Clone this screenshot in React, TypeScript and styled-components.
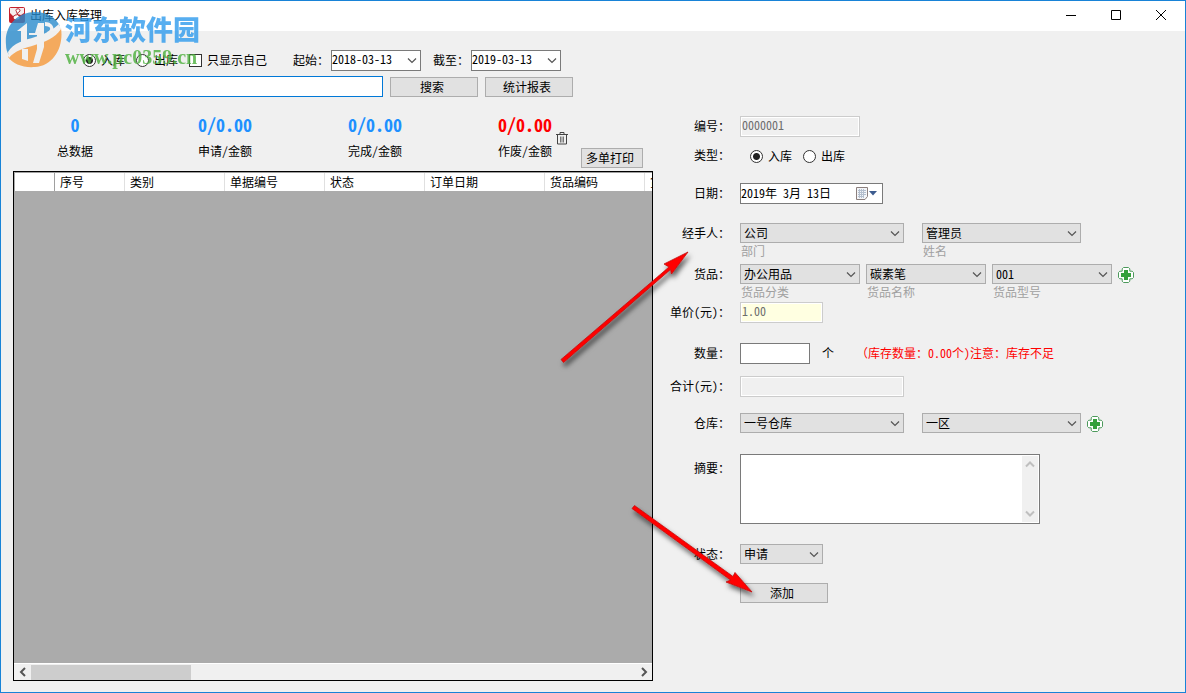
import React from 'react';
import styled, { createGlobalStyle } from 'styled-components';

const GlobalStyle = createGlobalStyle`
  *, *::before, *::after { box-sizing: border-box; }
  body {
    margin: 0;
    background: #f0f0f0;
  }
  body, button, input, select, textarea {
    font-family: "Noto Sans Mono CJK SC", "Noto Sans CJK SC", sans-serif;
    font-size: 12px;
    line-height: 16px;
    color: #000;
  }
`;

const Frame = styled.div`
  position: relative;
  display: flex;
  flex-direction: column;
  min-height: 100vh;
  border: 1px solid #1883d7;
  background: #f0f0f0;
`;

const TitleBar = styled.header`
  display: flex;
  align-items: center;
  height: 30px;
  padding: 0 2px 2px 8px;
  background: #fff;
`;

const Title = styled.h1`
  margin: 0 auto 0 5px;
  font-size: 12px;
  font-weight: 400;
  line-height: 16px;
`;

const CaptionButton = styled.button`
  display: grid;
  place-items: center;
  width: 45px;
  height: 28px;
  padding: 0;
  border: 0;
  background: transparent;
`;

const Body = styled.main`
  flex: 1;
  display: flex;
  padding: 0 12px 11px;
`;

const ListPane = styled.section`
  flex: 0 1 640px;
  min-width: 0;
  display: flex;
  flex-direction: column;
  padding-top: 19px;
`;

const FilterRow = styled.div`
  display: flex;
  align-items: center;
  gap: 12px;
  height: 20px;
  padding-left: 70px;
  white-space: nowrap;
`;

const SearchRow = styled.div`
  display: flex;
  align-items: flex-end;
  gap: 7px;
  margin-top: 6px;
  padding-left: 70px;
`;

const Choices = styled.div`
  display: flex;
  align-items: center;
  gap: 11px;
  margin-right: 14px;
`;

const Choice = styled.label`
  display: flex;
  align-items: center;
  gap: 5px;
`;

const Radio = styled.input.attrs({ type: 'radio' })`
  appearance: none;
  width: 13px;
  height: 13px;
  margin: 0;
  border: 1px solid #333;
  border-radius: 50%;
  background: #fff;
  &:checked {
    background: radial-gradient(circle, #222 0 3px, #fff 4px);
  }
`;

const Checkbox = styled.input.attrs({ type: 'checkbox' })`
  appearance: none;
  width: 13px;
  height: 13px;
  margin: 0;
  border: 1px solid #333;
  background: #fff;
`;

const DateLabel = styled.label`
  display: flex;
  align-items: center;
  gap: 2px;
`;

const Button = styled.button<{ $width: number }>`
  flex: none;
  width: ${(p) => p.$width}px;
  height: 20px;
  padding: 0 4px 0 0;
  border: 1px solid #adadad;
  background: #e1e1e1;
  line-height: 18px;
`;

const TextBox = styled.input<{ $width: number; $tone?: 'focus' | 'disabled' | 'price' }>`
  width: ${(p) => p.$width}px;
  height: 21px;
  padding: 0 1px 4px;
  border: 1px solid
    ${(p) => (p.$tone === 'focus' ? '#0078d7' : p.$tone ? '#cccccc' : '#7a7a7a')};
  background: ${(p) => (p.$tone === 'price' ? '#ffffe1' : p.$tone === 'disabled' ? '#f0f0f0' : '#fff')};
  box-shadow: ${(p) => (p.$tone === 'disabled' || p.$tone === 'price' ? 'inset 0 0 0 1px #fff' : 'none')};
  color: ${(p) => (p.$tone === 'focus' ? '#000' : '#6d6d6d')};
  outline: 0;
`;

const ComboBox = styled.div<{ $width: number; $light?: boolean }>`
  position: relative;
  width: ${(p) => p.$width}px;
  height: ${(p) => (p.$light ? 21 : 20)}px;
  select {
    appearance: none;
    width: 100%;
    height: 100%;
    padding: ${(p) => (p.$light ? '0 18px 3px 0' : '0 18px 1px 3px')};
    border: 1px solid ${(p) => (p.$light ? '#7a7a7a' : '#adadad')};
    border-radius: 0;
    background: ${(p) => (p.$light ? '#fff' : '#e1e1e1')};
    outline: 0;
  }
  svg {
    position: absolute;
    top: 7px;
    right: 4px;
    pointer-events: none;
  }
`;

const StatsRow = styled.div`
  display: flex;
  align-items: flex-start;
  height: 52px;
  margin-top: 19px;
  padding-left: 35px;
`;

const Stats = styled.div`
  display: flex;
  gap: 96px;
`;

const Stat = styled.div<{ $color: string }>`
  width: 54px;
  text-align: center;
  white-space: nowrap;
  strong {
    display: block;
    margin-bottom: 11px;
    font-size: 18px;
    line-height: 16px;
    color: ${(p) => p.$color};
  }
`;

const IconButton = styled.button<{ $height: number }>`
  display: grid;
  place-items: center;
  height: ${(p) => p.$height}px;
  padding: 0;
  border: 0;
  background: transparent;
`;

const StatActions = styled.div`
  display: flex;
  gap: 13px;
  height: 100%;
  padding-left: 4px;
  > :last-child { align-self: flex-end; }
`;

const GridBox = styled.div`
  flex: 1;
  display: flex;
  flex-direction: column;
  min-height: 300px;
  margin-top: 3px;
  border: 1px solid #000;
  background: #ababab;
`;

const GridView = styled.div`
  flex: 1;
  overflow: hidden;
  padding: 0 1px;
`;

const Table = styled.table`
  width: 731px;
  table-layout: fixed;
  border-collapse: separate;
  border-spacing: 0;
  border-top: 1px solid #a0a0a0;
  th {
    height: 18px;
    padding: 0 5px;
    border-right: 1px solid #e0e0e0;
    background: #fff;
    font-weight: 400;
    line-height: 16px;
    text-align: left;
    white-space: nowrap;
  }
  th:first-child { border-right-color: #a0a0a0; }
`;

const ScrollTrack = styled.div`
  display: flex;
  align-items: center;
  height: 17px;
  border-top: 1px solid #fff;
  background: #f0f0f0;
`;

const ScrollArrow = styled.button`
  display: grid;
  place-items: center;
  width: 17px;
  height: 16px;
  padding: 0;
  border: 0;
  background: transparent;
`;

const ScrollThumb = styled.div`
  width: 25%;
  height: 15px;
  margin-right: auto;
  background: #cdcdcd;
`;

const FormPane = styled.form`
  flex: 1;
  min-width: 0;
  padding-top: 85px;
`;

const Row = styled.div<{ $gap?: number }>`
  display: grid;
  grid-template-columns: 77px 1fr;
  column-gap: 10px;
  margin-top: ${(p) => p.$gap ?? 0}px;
`;

const RowLabel = styled.label<{ $tall?: boolean }>`
  line-height: ${(p) => (p.$tall ? 28 : 20)}px;
  text-align: right;
  white-space: nowrap;
`;

const Fields = styled.div<{ $gap?: number }>`
  display: flex;
  align-items: flex-start;
  gap: ${(p) => p.$gap ?? 6}px;
  white-space: nowrap;
`;

const TypeChoices = styled.div`
  display: flex;
  align-items: center;
  gap: 11px;
  height: 22px;
  padding-left: 10px;
`;

const Hint = styled.div`
  height: 16px;
  padding-left: 1px;
  line-height: 16px;
  color: #a0a0a0;
`;

const DateBox = styled.div`
  display: flex;
  align-items: center;
  width: 143px;
  height: 21px;
  padding-right: 5px;
  border: 1px solid #7a7a7a;
  background: #fff;
  input {
    flex: 1;
    min-width: 0;
    height: 19px;
    padding: 0 0 2px;
    border: 0;
    background: transparent;
    outline: 0;
  }
`;

const Unit = styled.span`
  padding-left: 6px;
  line-height: 20px;
`;

const Warning = styled.span`
  padding-left: 16px;
  line-height: 20px;
  color: #f00;
`;

const MemoBox = styled.div`
  display: flex;
  width: 300px;
  height: 70px;
  padding: 1px;
  border: 1px solid #7a7a7a;
  background: #fff;
  textarea {
    flex: 1;
    min-width: 0;
    padding: 2px;
    border: 0;
    outline: 0;
    resize: none;
    overflow: hidden;
  }
`;

const MemoScroll = styled.div`
  display: flex;
  flex-direction: column;
  justify-content: space-between;
  align-items: center;
  width: 16px;
  padding: 5px 0;
  background: #f0f0f0;
`;

const Overlay = styled.svg`
  position: absolute;
  top: -1px;
  left: -1px;
  width: 780px;
  height: 620px;
  pointer-events: none;
`;

const Watermark = styled.div`
  position: absolute;
  top: 10px;
  left: 4px;
  display: flex;
  gap: 3px;
  opacity: 0.8;
  pointer-events: none;
`;

const WatermarkName = styled.div`
  font-family: "Noto Sans CJK SC", sans-serif;
  font-size: 27px;
  font-weight: 900;
  line-height: 36px;
  white-space: nowrap;
  color: #2e9bed;
`;

const WatermarkSite = styled.div`
  font-family: "Liberation Serif", serif;
  font-size: 20px;
  font-weight: 700;
  line-height: 20px;
  white-space: nowrap;
  color: #4cb03c;
`;

type Direction = 'down' | 'up' | 'left' | 'right';

const chevrons: Record<Direction, string> = {
  down: 'M1 1.5l4 4 4-4',
  up: 'M1 5.5l4-4 4 4',
  left: 'M6 1L2 5l4 4',
  right: 'M2 1l4 4-4 4',
};

function Chevron({ dir = 'down', color = '#555', weight = 1.2 }: { dir?: Direction; color?: string; weight?: number }) {
  const vertical = dir === 'down' || dir === 'up';
  return (
    <svg width={vertical ? 10 : 8} height={vertical ? 7 : 10} fill="none" aria-hidden="true">
      <path d={chevrons[dir]} stroke={color} strokeWidth={weight} />
    </svg>
  );
}

function Combo({ id, label, value, width, light }: { id?: string; label?: string; value: string; width: number; light?: boolean }) {
  return (
    <ComboBox $width={width} $light={light}>
      <select id={id} aria-label={label} defaultValue={value}>
        <option>{value}</option>
      </select>
      <Chevron />
    </ComboBox>
  );
}

function HintedCombo({ hint, ...rest }: { hint: string; id?: string; value: string; width: number }) {
  return (
    <div>
      <Combo label={hint} {...rest} />
      <Hint>{hint}</Hint>
    </div>
  );
}

function AddButton({ label }: { label: string }) {
  return (
    <IconButton $height={22} type="button" aria-label={label}>
      <svg width="16" height="16" aria-hidden="true">
        <path
          d="M5.500 .5h5l1.300 1.300V4.200h2.400l1.300 1.300v5l-1.300 1.300h-2.400v2.400l-1.300 1.300h-5l-1.300-1.300v-2.400H1.800L.5 10.500v-5l1.300-1.300h2.400V1.800z"
          fill="#fff"
          stroke="#4d9a5c"
        />
        <path d="M6 3h4v3h3v4h-3v3H6v-3H3V6h3z" fill="#35a03c" />
      </svg>
    </IconButton>
  );
}

function AppIcon() {
  return (
    <svg width="16" height="16" aria-hidden="true">
      <rect width="16" height="16" rx="2" fill="#c4202c" />
      <path d="M1 1h14v5l-3 2-4-1-4 2-3-3z" fill="#f5eeee" />
      <path d="M8 2c3-1 4 2 2 3-2 1-2 3 0 4s1 4-2 4-5-2-3-4 4 0 3-3-2-3 0-4z" fill="#fff" stroke="#b3202b" />
    </svg>
  );
}

function WatermarkLogo() {
  return (
    <svg width="57" height="58" aria-hidden="true">
      <path d="M1 34C-1 14 13 1 30 1c12 0 20 5 25 14-3 4-9 8-16 11C29 31 10 33 4 44 2 41 1 38 1 34z" fill="#2a8ccd" />
      <path d="M3 46c9-9 22-11 32-15 10-4 17-9 21-14 3 20-8 38-26 39C18 57 8 53 3 46z" fill="#f5993a" />
      <path d="M3 41c5-9 17-12 27-15 10-3 19-8 24-13l2 5c-6 9-16 13-26 16C20 37 9 40 4 47z" fill="#f0f0f0" />
      <path d="M12 20l10-8v19h-6V20zM24 22h6l3-10h6v24l-5 16h-6l4-14V24h-8zM17 38h6v12l-6-2zM40 11c10 0 12 12 2 14v-4c5-2 4-6-2-6z" fill="#f0f0f0" />
    </svg>
  );
}

const stats = [
  { value: '0', label: '总数据', color: '#1e90ff' },
  { value: '0/0.00', label: '申请/金额', color: '#1e90ff' },
  { value: '0/0.00', label: '完成/金额', color: '#1e90ff' },
  { value: '0/0.00', label: '作废/金额', color: '#ff0000' },
];

const columns = [
  { title: '', width: 40 },
  { title: '序号', width: 70 },
  { title: '类别', width: 100 },
  { title: '单据编号', width: 100 },
  { title: '状态', width: 100 },
  { title: '订单日期', width: 120 },
  { title: '货品编码', width: 100 },
  { title: '货品名称', width: 101 },
];

export default function App() {
  return (
    <>
      <GlobalStyle />
      <Frame>
        <TitleBar>
          <AppIcon />
          <Title>出库入库管理</Title>
          <CaptionButton aria-label="最小化">
            <svg width="10" height="10"><path d="M0 5.500h10" stroke="#000" /></svg>
          </CaptionButton>
          <CaptionButton aria-label="最大化">
            <svg width="10" height="10"><path d="M.5.5h9v9h-9z" fill="none" stroke="#000" /></svg>
          </CaptionButton>
          <CaptionButton aria-label="关闭">
            <svg width="10" height="10"><path d="M0 0l10 10M10 0L0 10" stroke="#000" /></svg>
          </CaptionButton>
        </TitleBar>

        <Body>
          <ListPane>
            <FilterRow>
              <Choices>
                <Choice><Radio name="filter" defaultChecked />入库</Choice>
                <Choice><Radio name="filter" />出库</Choice>
                <Choice><Checkbox />只显示自己</Choice>
              </Choices>
              <DateLabel>起始：<Combo value="2018-03-13" width={90} light /></DateLabel>
              <DateLabel>截至：<Combo value="2019-03-13" width={90} light /></DateLabel>
            </FilterRow>
            <SearchRow>
              <TextBox $width={300} $tone="focus" aria-label="搜索内容" />
              <Button $width={88}>搜索</Button>
              <Button $width={88}>统计报表</Button>
            </SearchRow>

            <StatsRow>
              <Stats>
                {stats.map((s) => (
                  <Stat key={s.label} $color={s.color}>
                    <strong>{s.value}</strong>
                    {s.label}
                  </Stat>
                ))}
              </Stats>
              <StatActions>
                <IconButton $height={43} aria-label="删除">
                  <svg width="12" height="14" fill="none" stroke="#444" aria-hidden="true">
                    <path d="M0 3.500h12M4 3V1.500h4V3M1.500 4v9h9V4" />
                    <path d="M4.500 5.500v6M6 5.500v6M7.500 5.500v6" stroke="#777" />
                  </svg>
                </IconButton>
                <Button $width={62}>多单打印</Button>
              </StatActions>
            </StatsRow>

            <GridBox>
              <GridView>
                <Table>
                  <colgroup>
                    {columns.map((c, i) => <col key={i} width={c.width} />)}
                  </colgroup>
                  <thead>
                    <tr>{columns.map((c, i) => <th key={i} scope="col">{c.title}</th>)}</tr>
                  </thead>
                </Table>
              </GridView>
              <ScrollTrack>
                <ScrollArrow aria-label="向左滚动"><Chevron dir="left" weight={2} /></ScrollArrow>
                <ScrollThumb />
                <ScrollArrow aria-label="向右滚动"><Chevron dir="right" weight={2} /></ScrollArrow>
              </ScrollTrack>
            </GridBox>
          </ListPane>

          <FormPane onSubmit={(e) => e.preventDefault()}>
            <Row>
              <RowLabel htmlFor="code">编号：</RowLabel>
              <Fields><TextBox id="code" $width={120} $tone="disabled" defaultValue="0000001" disabled /></Fields>
            </Row>
            <Row $gap={8}>
              <RowLabel as="span">类型：</RowLabel>
              <TypeChoices role="radiogroup" aria-label="类型">
                <Choice><Radio name="kind" defaultChecked />入库</Choice>
                <Choice><Radio name="kind" />出库</Choice>
              </TypeChoices>
            </Row>
            <Row $gap={16}>
              <RowLabel htmlFor="date">日期：</RowLabel>
              <DateBox>
                <input id="date" defaultValue="2019年 3月 13日" />
                <IconButton $height={19} type="button" aria-label="选择日期">
                  <svg width="21" height="13" aria-hidden="true">
                    <path d="M.5.500h11v9l-2.500 3H.5z" fill="#f3f5f8" stroke="#8b7f7d" />
                    <path d="M2 3.500h8M2 5.500h8M2 7.500h8M2 9.500h6M3.500 2v9M5.500 2v9M7.500 2v9" stroke="#b4bfce" />
                    <path d="M13 4h8l-4 4.500z" fill="#3d5c8f" />
                  </svg>
                </IconButton>
              </DateBox>
            </Row>
            <Row $gap={19}>
              <RowLabel htmlFor="dept">经手人：</RowLabel>
              <Fields $gap={18}>
                <HintedCombo id="dept" value="公司" hint="部门" width={164} />
                <HintedCombo value="管理员" hint="姓名" width={159} />
              </Fields>
            </Row>
            <Row $gap={5}>
              <RowLabel htmlFor="goods">货品：</RowLabel>
              <Fields>
                <HintedCombo id="goods" value="办公用品" hint="货品分类" width={120} />
                <HintedCombo value="碳素笔" hint="货品名称" width={120} />
                <HintedCombo value="001" hint="货品型号" width={120} />
                <AddButton label="新增货品" />
              </Fields>
            </Row>
            <Row $gap={2}>
              <RowLabel htmlFor="price">单价(元)：</RowLabel>
              <Fields><TextBox id="price" $width={83} $tone="price" defaultValue="1.00" readOnly /></Fields>
            </Row>
            <Row $gap={20}>
              <RowLabel htmlFor="amount">数量：</RowLabel>
              <Fields>
                <TextBox id="amount" $width={70} />
                <Unit>个</Unit>
                <Warning>（库存数量：0.00个)注意：库存不足</Warning>
              </Fields>
            </Row>
            <Row $gap={12}>
              <RowLabel htmlFor="total">合计(元)：</RowLabel>
              <Fields><TextBox id="total" $width={164} $tone="disabled" disabled /></Fields>
            </Row>
            <Row $gap={16}>
              <RowLabel htmlFor="store">仓库：</RowLabel>
              <Fields>
                <Fields $gap={18}>
                  <Combo id="store" value="一号仓库" width={164} />
                  <Combo label="库区" value="一区" width={159} />
                </Fields>
                <AddButton label="新增仓库" />
              </Fields>
            </Row>
            <Row $gap={19}>
              <RowLabel htmlFor="memo" $tall>摘要：</RowLabel>
              <MemoBox>
                <textarea id="memo" />
                <MemoScroll>
                  <Chevron dir="up" color="#bfbfbf" weight={2} />
                  <Chevron dir="down" color="#bfbfbf" weight={2} />
                </MemoScroll>
              </MemoBox>
            </Row>
            <Row $gap={20}>
              <RowLabel htmlFor="state">状态：</RowLabel>
              <Combo id="state" value="申请" width={83} />
            </Row>
            <Row $gap={19}>
              <span />
              <Button $width={88} type="submit">添加</Button>
            </Row>
          </FormPane>
        </Body>

        <Watermark aria-hidden="true">
          <WatermarkLogo />
          <div>
            <WatermarkName>河东软件园</WatermarkName>
            <WatermarkSite>www.pc0359.cn</WatermarkSite>
          </div>
        </Watermark>

        <Overlay aria-hidden="true">
          <defs>
            <filter id="arrow-shadow" x="-10%" y="-10%" width="130%" height="130%">
              <feDropShadow dx="2" dy="4" stdDeviation="2.5" floodColor="#000" floodOpacity="0.6" />
            </filter>
          </defs>
          <g fill="#f00" stroke="#c01010" strokeWidth="0.8" filter="url(#arrow-shadow)">
            <path d="M561 359.500L669 267l-5-3 24-12-16.500 22-1-4.500L563.500 362.500z" />
            <path d="M634.500 505.500L733 576.500l2-4 17 19.500-26-10 4.500-2L632 508.500z" />
          </g>
        </Overlay>
      </Frame>
    </>
  );
}
